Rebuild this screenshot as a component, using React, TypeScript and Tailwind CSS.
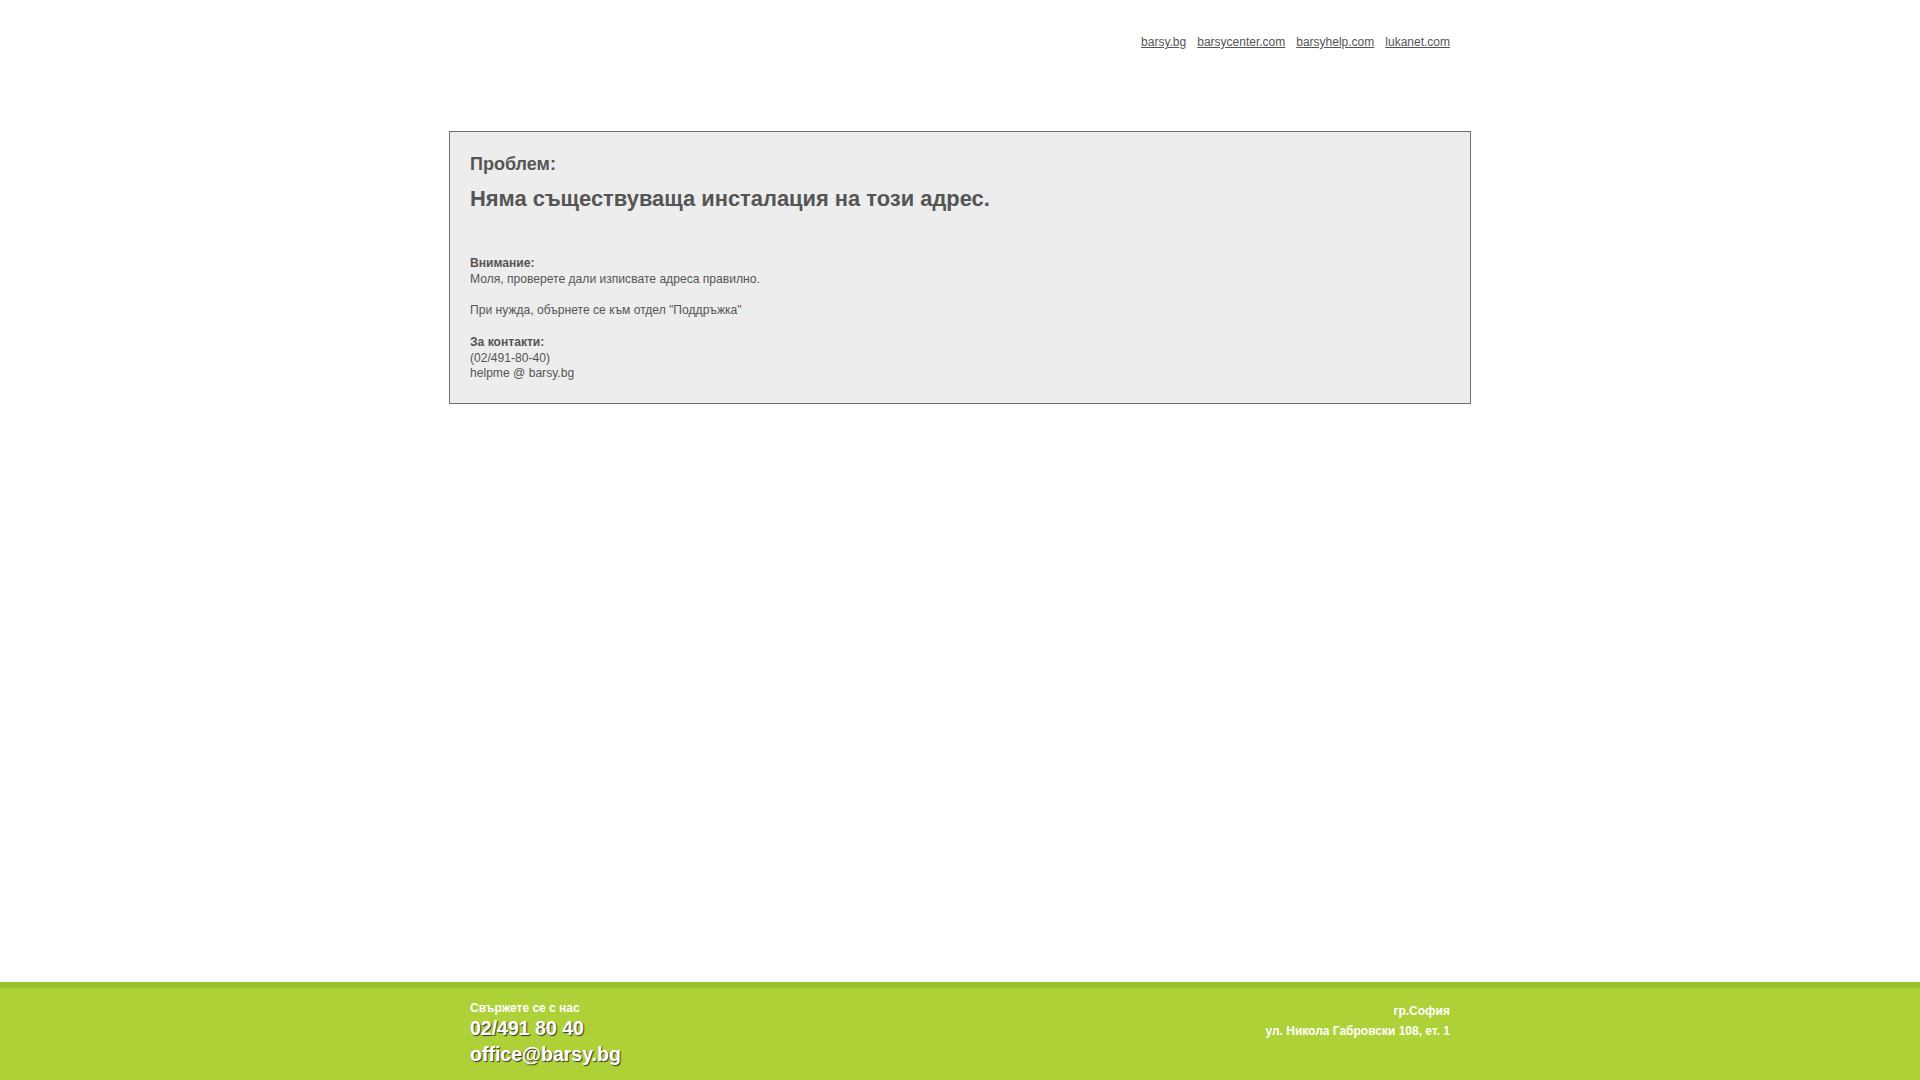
export default function App() {
    const links = ['barsy.bg', 'barsycenter.com', 'barsyhelp.com', 'lukanet.com'];

    return (
        <div className="min-h-screen flex flex-col bg-white font-['Liberation_Sans',Arial,sans-serif] text-[#555]">
            {/* top links */}
            <div className="w-[980px] mx-auto flex justify-end pt-[35px] h-[131px]">
                <div className="flex gap-[11px] text-[12px] leading-[15px] h-[15px]">
                    {links.map((l) => (
                        <a key={l} href="#" className="text-[#555] underline">
                            {l}
                        </a>
                    ))}
                </div>
            </div>

            {/* message box */}
            <div className="w-[1022px] mx-auto border border-[#707070] bg-[#ededed] px-[20px] pt-[22px] pb-[21px]">
                <h2 className="text-[18px] leading-[20px] font-bold">Проблем:</h2>
                <h1 className="mt-[12px] text-[21.9px] leading-[26px] font-bold">
                    Няма съществуваща инсталация на този адрес.
                </h1>
                <div className="mt-[43px] text-[12.1px] leading-[16px]">
                    <p className="font-bold">Внимание:</p>
                    <p>Моля, проверете дали изписвате адреса правилно.</p>
                    <p className="mt-[15px]">При нужда, обърнете се към отдел "Поддръжка"</p>
                    <p className="mt-[16px] font-bold">За контакти:</p>
                    <p className="mt-[0.5px] leading-[15.5px]">(02/491-80-40)</p>
                    <p className="leading-[15.5px]">helpme @ barsy.bg</p>
                </div>
            </div>

            <div className="flex-1" />

            {/* footer */}
            <div className="border-t-[6px] border-[#9bc12b] bg-[#add136] h-[98px]">
                <div className="w-[980px] mx-auto flex justify-between text-white font-bold">
                    <div className="pt-[13px]">
                        <p className="text-[12px] leading-[14px]">Свържете се с нас</p>
                        <p className="mt-[1px] text-[19.5px] leading-[24px] [text-shadow:1px_1px_1px_#333]">
                            02/491 80 40
                        </p>
                        <p className="mt-[2px] text-[19.5px] leading-[24px] [text-shadow:1px_1px_1px_#333]">
                            office@barsy.bg
                        </p>
                    </div>
                    <div className="pt-[13px] text-right text-[12px] leading-[20px]">
                        <p>гр.София</p>
                        <p>ул. Никола Габровски 108, ет. 1</p>
                    </div>
                </div>
            </div>
        </div>
    );
}
